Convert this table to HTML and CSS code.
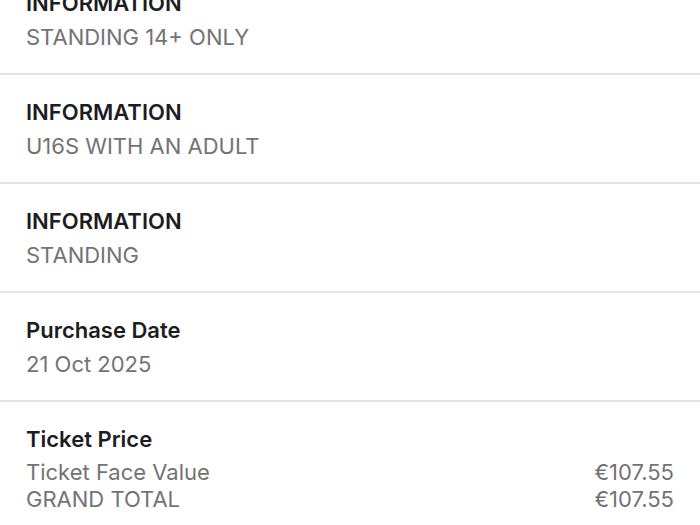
FILE: index.html
```html
<!DOCTYPE html>
<html lang="en">
<head>
    <meta charset="UTF-8">
    <title>Ticket details</title>
    <link rel="stylesheet" href="styles.css">
</head>
<body>
<div class="details">
    <div class="row first">
        <div class="label">INFORMATION</div>
        <div class="value">STANDING 14+ ONLY</div>
    </div>
    <div class="row">
        <div class="label">INFORMATION</div>
        <div class="value">U16S WITH AN ADULT</div>
    </div>
    <div class="row">
        <div class="label">INFORMATION</div>
        <div class="value">STANDING</div>
    </div>
    <div class="row">
        <div class="label">Purchase Date</div>
        <div class="value">21 Oct 2025</div>
    </div>
    <div class="row last">
        <div class="label">Ticket Price</div>
        <div class="price">
            <span>Ticket Face Value</span>
            <span>€107.55</span>
        </div>
        <div class="price">
            <span>GRAND TOTAL</span>
            <span>€107.55</span>
        </div>
    </div>
</div>
</body>
</html>
```
FILE: styles.css
```css
body {
    margin: 0;
    background-color: #ffffff;
    font-family: Inter, "Noto Sans", sans-serif;
}

.details {
    margin-top: -34px;
}

.row {
    padding: 22px 26px 0 26px;
    height: 85px;
    border-bottom: 2px solid #e4e4e4;
}

.row.last {
    border-bottom: none;
}

.label {
    font-size: 22px;
    font-weight: 600;
    line-height: 30px;
    color: #1d1d1f;
}

.value {
    margin-top: 4px;
    font-size: 22px;
    line-height: 30px;
    color: #737373;
}

.price {
    display: flex;
    justify-content: space-between;
    font-size: 22px;
    line-height: 27px;
    color: #737373;
}

.label + .price {
    margin-top: 5px;
}
```
